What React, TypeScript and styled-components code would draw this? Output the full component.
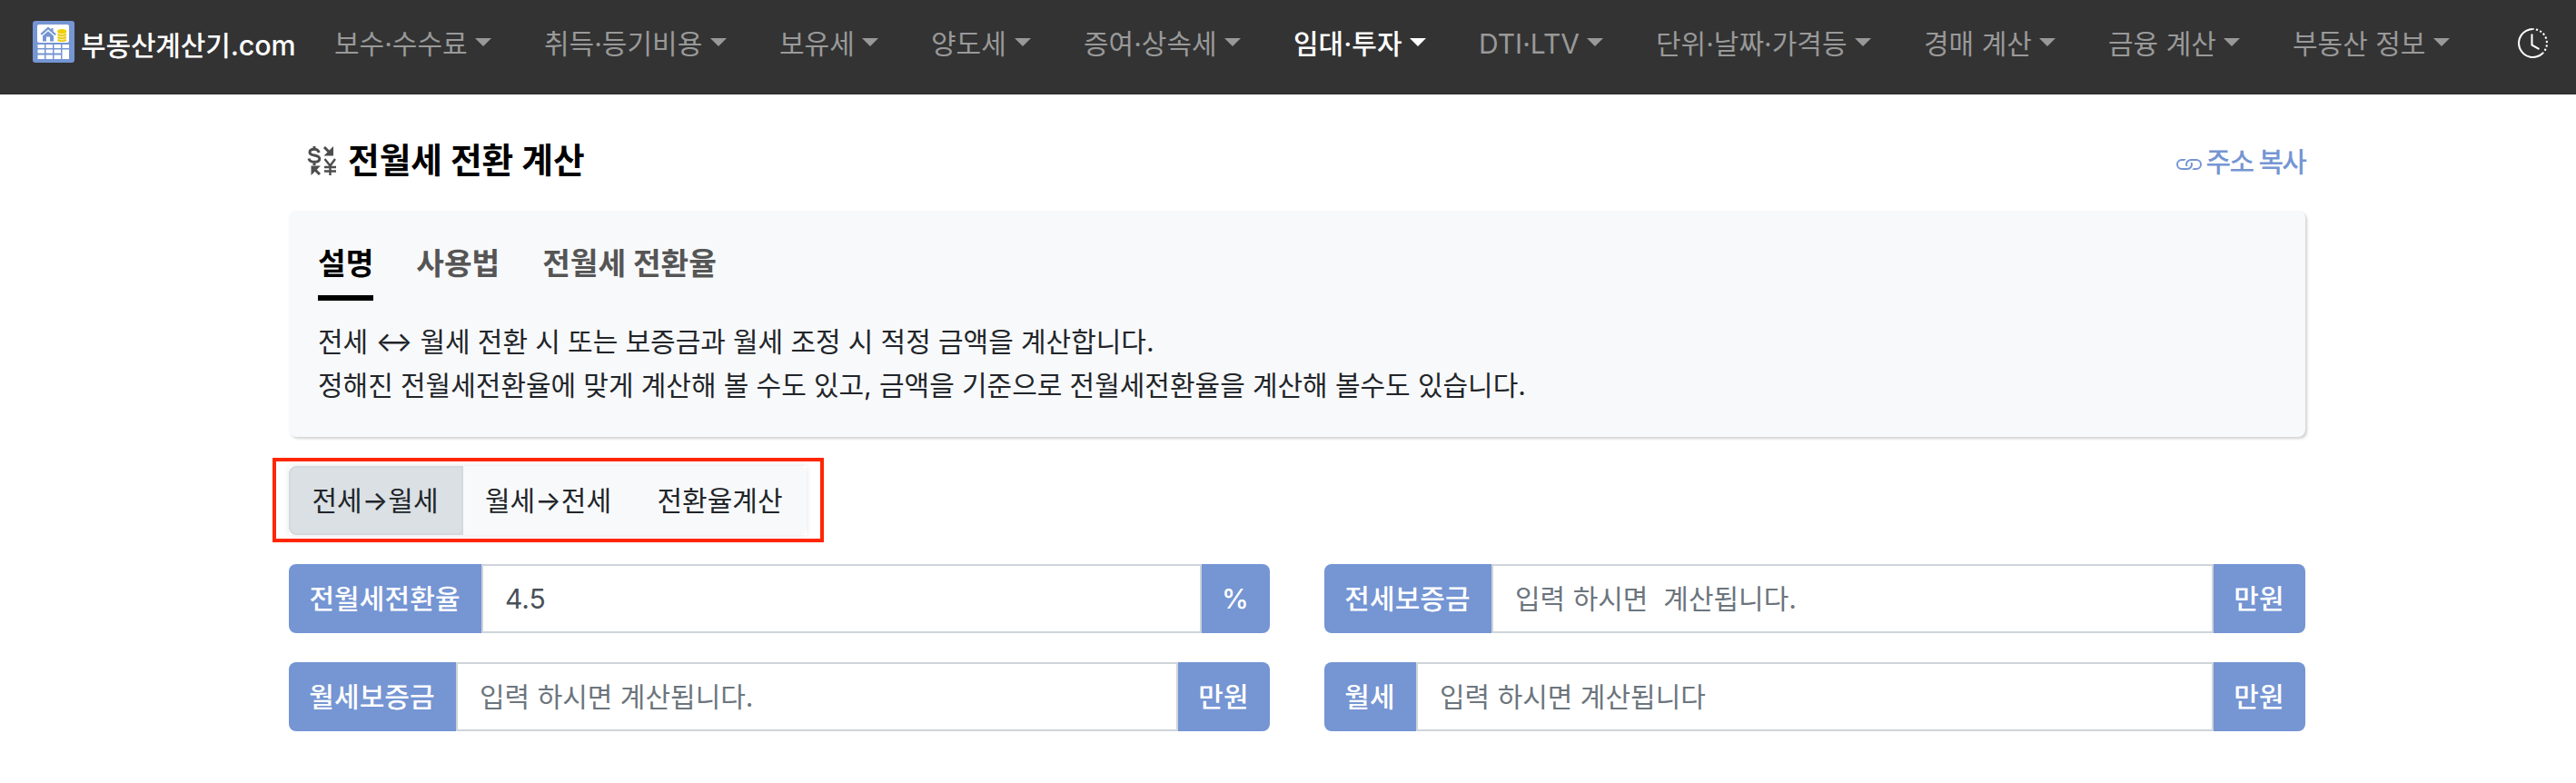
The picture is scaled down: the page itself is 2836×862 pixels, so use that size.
import React from "react";
import styled, { createGlobalStyle } from "styled-components";
import { BsClockHistory, BsLink } from "react-icons/bs";

const GlobalStyle = createGlobalStyle`
  *, *::before, *::after { box-sizing: border-box; }
  body {
    margin: 0;
    background: #fff;
    color: #212529;
    font-family: Inter, "Noto Sans CJK KR", sans-serif;
    font-size: 30px;
    line-height: 48px;
  }
  input, button { font: inherit; margin: 0; }
`;

const Navbar = styled.header`
  display: flex;
  align-items: flex-start;
  height: 104px;
  padding: 23px 31px 0 36px;
  background: #333;
  border-bottom: 1px solid #2f2a2d;
  white-space: nowrap;
`;

const Brand = styled.a`
  display: flex;
  width: 331px;
  gap: 7px;
  color: #fff;
  font-weight: 500;
  letter-spacing: -0.15px;
  line-height: 54px;
`;

const NavList = styled.nav`
  display: flex;
  gap: 57px;
  flex: 1;
`;

const NavItem = styled.a<{ $width: number; $active?: boolean }>`
  display: flex;
  justify-content: space-between;
  width: ${(p) => p.$width}px;
  padding-left: 1px;
  color: ${(p) => (p.$active ? "#fff" : "#999")};
  font-weight: ${(p) => (p.$active ? 500 : 400)};
  line-height: 50px;
`;

const Caret = styled.i`
  width: 0;
  height: 0;
  margin-top: 19px;
  border: 9px solid transparent;
  border-top-color: currentColor;
  border-bottom: 0;
`;

const HistoryButton = styled.span`
  display: flex;
  margin-top: 8px;
  color: #fff;
`;

const Page = styled.main`
  width: 2220px;
  margin-left: 318px;
`;

const TitleRow = styled.div`
  display: flex;
  justify-content: space-between;
  align-items: flex-start;
  height: 128px;
  padding: 43px 0 0 20px;
`;

const Title = styled.h1`
  display: flex;
  align-items: center;
  gap: 11px;
  margin: 0;
  color: #000;
  font-size: 37.7px;
  font-weight: 700;
  line-height: 59px;
`;

const CopyLink = styled.a`
  display: flex;
  gap: 3px;
  align-items: center;
  color: #7595d3;
  font-weight: 500;
  letter-spacing: -1.8px;
  line-height: 63px;
  svg { margin-top: 3px; }
`;

const InfoCard = styled.section`
  height: 249px;
  padding: 26px 32px;
  border-radius: 8px;
  background: #f8f9fb;
  box-shadow: 2px 2px 3px rgba(0, 0, 0, 0.18);
`;

const InfoTabs = styled.div`
  display: flex;
  gap: 47px;
  margin-bottom: 21px;
`;

const InfoTab = styled.span<{ $active?: boolean }>`
  height: 73px;
  border-bottom: 6px solid ${(p) => (p.$active ? "#000" : "transparent")};
  color: ${(p) => (p.$active ? "#000" : "#555")};
  font-size: 33.3px;
  font-weight: 700;
  line-height: 64px;
`;

const InfoText = styled.p`
  margin: 0;
  word-spacing: -0.25px;
  white-space: nowrap;
`;

const ModeFrame = styled.div`
  width: 607px;
  height: 93px;
  margin: 23px 0 24px -18px;
  padding: 5px 14px;
  border: 4px solid #ff2600;
`;

const ModeGroup = styled.div`
  display: flex;
  width: 570px;
  height: 76px;
  background: #fff;
  box-shadow: 0 0 6px rgba(0, 0, 0, 0.1);
`;

const ModeButton = styled.button<{ $width: number; $active?: boolean }>`
  width: ${(p) => p.$width}px;
  padding: 0 2px 0 0;
  border: 2px solid ${(p) => (p.$active ? "#d3d9df" : "#f8f9fb")};
  background: ${(p) => (p.$active ? "#dae0e4" : "#f8f9fb")};
  color: #212529;
  white-space: nowrap;
  &:first-child { border-radius: 8px 0 0 8px; }
  &:last-child { border-radius: 0 8px 8px 0; }
`;

const Form = styled.form`
  display: grid;
  grid-template-columns: 1080px 1080px;
  gap: 32px 60px;
`;

const InputGroup = styled.label`
  display: flex;
  height: 76px;
  border-radius: 8px;
  overflow: hidden;
`;

const Addon = styled.span<{ $width: number }>`
  display: flex;
  justify-content: center;
  align-items: center;
  flex: none;
  width: ${(p) => p.$width}px;
  padding-right: 1px;
  background: #7595d3;
  color: #fff;
  font-weight: 500;
  letter-spacing: 0.1px;
  white-space: nowrap;
`;

const Field = styled.input`
  flex: 1;
  min-width: 0;
  padding: 0 24px;
  border: 2px solid #ced4da;
  border-radius: 0;
  outline: 0;
  background: #fff;
  color: #495057;
  &::placeholder { color: #6c757d; opacity: 1; }
`;

const Latin = styled.span`
  font-size: 30.5px;
`;

const LogoIcon = () => (
  <svg width="46" height="46" viewBox="0 0 46 46">
    <rect width="46" height="46" rx="3" fill="#7595d3" />
    <rect x="5" y="4" width="35" height="20" rx="2" fill="#fff" />
    <path d="M8.500 14 17 6.500l3.500 3V8h2v3.500L26 14.500l-1.500 1.500L17 9.500 10 15.700z" fill="#7595d3" />
    <path d="M11 16.500 17 11.300l6 5.200V22.500h-4v-5h-4v5h-4z" fill="#7595d3" />
    <rect x="27.500" y="11" width="9.500" height="12" rx="2" fill="#f9ea9a" />
    <ellipse cx="32.200" cy="11.500" rx="5" ry="2.500" fill="#f0d000" />
    <path d="M27.500 15q4.700 2.500 9.500 0M27.500 18q4.700 2.500 9.500 0M27.500 21q4.700 2.500 9.500 0" stroke="#e8cb10" strokeWidth="1.500" fill="none" />
    <path d="M5.500 26h7.500v4H5.500zM14.500 26h7.500v4h-7.500zM23.500 26H31v4h-7.500zM32.500 26H40v4h-7.500zM5.500 31.500h7.500v4H5.500zM14.500 31.500h7.500v4h-7.500zM23.500 31.500H31v4h-7.500zM32.500 31.500H40V42h-7.500zM5.500 37.500h7.500V42H5.500zM14.500 37.500h7.500V42h-7.500zM23.500 37.500H31V42h-7.500z" fill="#fff" />
  </svg>
);

const ExchangeIcon = () => (
  <svg width="34" height="34" viewBox="0 0 34 34" fill="none" stroke="#4d4d4d" strokeWidth="3">
    <path d="M13.200 8C12.500 5.500 11 4.300 8 4.300 5 4.300 3 5.500 3 7.700 3 12.500 13.800 9.500 13.800 14.800 13.800 17 12 18.300 8.300 18.300 4.500 18.300 2.500 17 2 14.500M8 1v3M8 18v4" />
    <path d="M19.500 15 25.500 22.500 31 15M25.500 22v11M19 24h13M19 28.500h13" strokeWidth="2.400" />
    <path d="M19 2l6 6M14 32l-6-6" />
    <path d="M29 1v10.500H18.500zM4.500 33V22.500H15z" fill="#4d4d4d" stroke="none" />
  </svg>
);

const menu = [
  { label: "보수·수수료", width: 174 },
  { label: "취득·등기비용", width: 202 },
  { label: "보유세", width: 110 },
  { label: "양도세", width: 111 },
  { label: "증여·상속세", width: 174 },
  { label: "임대·투자", width: 147, active: true },
  { label: "DTI·LTV", width: 138 },
  { label: "단위·날짜·가격등", width: 238 },
  { label: "경매 계산", width: 146 },
  { label: "금융 계산", width: 146 },
  { label: "부동산 정보", width: 174 },
];

const fields = [
  { label: "전월세전환율", labelWidth: 212, value: "4.5", unit: "%", unitWidth: 75 },
  { label: "전세보증금", labelWidth: 184, hint: "입력 하시면  계산됩니다.", unit: "만원", unitWidth: 101 },
  { label: "월세보증금", labelWidth: 184, hint: "입력 하시면 계산됩니다.", unit: "만원", unitWidth: 101 },
  { label: "월세", labelWidth: 101, hint: "입력 하시면 계산됩니다", unit: "만원", unitWidth: 101 },
];

export default function App() {
  return (
    <>
      <GlobalStyle />
      <Navbar>
        <Brand>
          <LogoIcon />
          <span>부동산계산기<Latin>.com</Latin></span>
        </Brand>
        <NavList>
          {menu.map((m) => (
            <NavItem key={m.label} $width={m.width} $active={m.active}>
              {m.label}
              <Caret />
            </NavItem>
          ))}
        </NavList>
        <HistoryButton><BsClockHistory size={33} /></HistoryButton>
      </Navbar>
      <Page>
        <TitleRow>
          <Title><ExchangeIcon />전월세 전환 계산</Title>
          <CopyLink><BsLink size={32} />주소 복사</CopyLink>
        </TitleRow>
        <InfoCard>
          <InfoTabs>
            <InfoTab $active>설명</InfoTab>
            <InfoTab>사용법</InfoTab>
            <InfoTab>전월세 전환율</InfoTab>
          </InfoTabs>
          <InfoText>전세 <Latin>↔</Latin> 월세 전환 시 또는 보증금과 월세 조정 시 적정 금액을 계산합니다.</InfoText>
          <InfoText>정해진 전월세전환율에 맞게 계산해 볼 수도 있고, 금액을 기준으로 전월세전환율을 계산해 볼수도 있습니다.</InfoText>
        </InfoCard>
        <ModeFrame>
          <ModeGroup>
            <ModeButton type="button" $width={192} $active>전세→월세</ModeButton>
            <ModeButton type="button" $width={189}>월세→전세</ModeButton>
            <ModeButton type="button" $width={189}>전환율계산</ModeButton>
          </ModeGroup>
        </ModeFrame>
        <Form>
          {fields.map((f) => (
            <InputGroup key={f.label}>
              <Addon $width={f.labelWidth}>{f.label}</Addon>
              <Field defaultValue={f.value} placeholder={f.hint} />
              <Addon $width={f.unitWidth}>{f.unit}</Addon>
            </InputGroup>
          ))}
        </Form>
      </Page>
    </>
  );
}
